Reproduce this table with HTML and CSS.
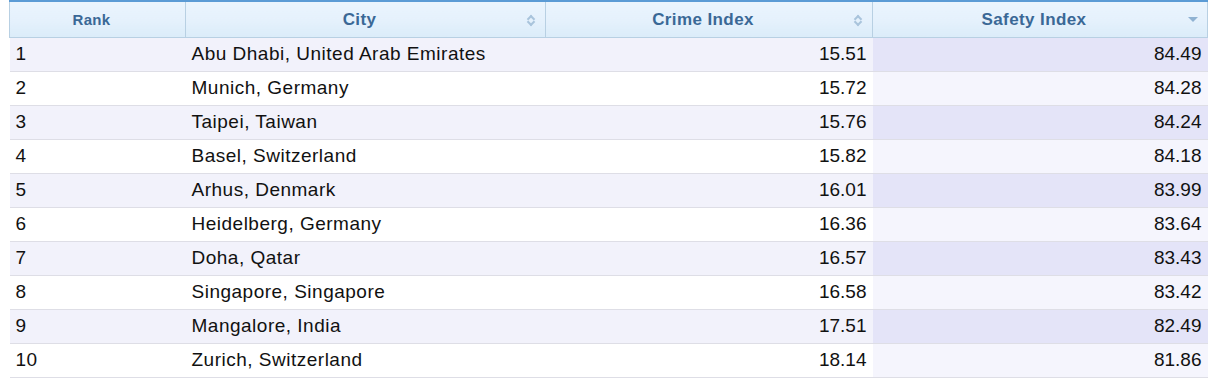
FILE: index.html
```html
<!DOCTYPE html>
<html lang="en">
  <head>
    <meta charset="UTF-8" />
    <title>Safety Index by City</title>
    <link rel="stylesheet" href="styles.css">
  </head>
  <body>
    <table class="rank-table">
      <thead>
        <tr>
          <th class="col-rank">Rank</th>
          <th class="col-city sortable">City<span class="sort both"></span></th>
          <th class="col-crime sortable">Crime Index<span class="sort both"></span></th>
          <th class="col-safety sortable">Safety Index<span class="sort desc"></span></th>
        </tr>
      </thead>
      <tbody>
        <tr><td>1</td><td>Abu Dhabi, United Arab Emirates</td><td class="num">15.51</td><td class="num sorted">84.49</td></tr>
        <tr><td>2</td><td>Munich, Germany</td><td class="num">15.72</td><td class="num sorted">84.28</td></tr>
        <tr><td>3</td><td>Taipei, Taiwan</td><td class="num">15.76</td><td class="num sorted">84.24</td></tr>
        <tr><td>4</td><td>Basel, Switzerland</td><td class="num">15.82</td><td class="num sorted">84.18</td></tr>
        <tr><td>5</td><td>Arhus, Denmark</td><td class="num">16.01</td><td class="num sorted">83.99</td></tr>
        <tr><td>6</td><td>Heidelberg, Germany</td><td class="num">16.36</td><td class="num sorted">83.64</td></tr>
        <tr><td>7</td><td>Doha, Qatar</td><td class="num">16.57</td><td class="num sorted">83.43</td></tr>
        <tr><td>8</td><td>Singapore, Singapore</td><td class="num">16.58</td><td class="num sorted">83.42</td></tr>
        <tr><td>9</td><td>Mangalore, India</td><td class="num">17.51</td><td class="num sorted">82.49</td></tr>
        <tr><td>10</td><td>Zurich, Switzerland</td><td class="num">18.14</td><td class="num sorted">81.86</td></tr>
      </tbody>
    </table>
  </body>
</html>
```

FILE: styles.css
```css
body {
  margin: 0;
  padding: 0 5px 0 9px;
  background: #fff;
  font-family: "Liberation Sans", Arial, sans-serif;
}

.rank-table {
  width: 1199px;
  border-collapse: collapse;
  table-layout: fixed;
}

.rank-table thead tr {
  border-top: 2px solid #5b9bd5;
}

.rank-table th {
  position: relative;
  height: 35px;
  padding: 0 12px 0 0;
  background: linear-gradient(to bottom, #eaf4fd 0%, #e5f1fc 50%, #dbecf9 100%);
  color: #3a6896;
  font-size: 17px;
  letter-spacing: 0.4px;
  font-weight: bold;
  text-align: center;
  border-left: 1px solid #b8d0e3;
  border-right: 1px solid #b8d0e3;
  border-bottom: 1px solid #b8d0e3;
}

th.col-rank {
  width: 163px;
  font-size: 15px;
  letter-spacing: 0.3px;
}

.col-city {
  width: 347px;
}

.col-crime {
  width: 314px;
}

.sort {
  position: absolute;
  right: 10px;
  top: 50%;
  width: 8px;
  height: 12px;
  margin-top: -6px;
}

.sort.both::before,
.sort.both::after {
  content: "";
  position: absolute;
  left: 1px;
  width: 4px;
  height: 4px;
  border-left: 2px solid #a9c4dc;
  border-top: 2px solid #a9c4dc;
}

.sort.both::before {
  top: 2px;
  transform: rotate(45deg);
}

.sort.both::after {
  top: 5px;
  transform: rotate(225deg);
}

.sort.desc::before {
  content: "";
  position: absolute;
  left: -1px;
  top: 3px;
  border-left: 5px solid transparent;
  border-right: 5px solid transparent;
  border-top: 5px solid #8fb2d2;
}

.rank-table td {
  height: 32px;
  padding: 0 6px 1px;
  font-size: 19px;
  letter-spacing: 0.5px;
  color: #111;
  border-bottom: 1px solid #dedee6;
  white-space: nowrap;
}

.rank-table td.num {
  text-align: right;
  letter-spacing: 0;
}

.rank-table tbody tr:nth-child(odd) td {
  background: #f2f2fb;
}

.rank-table tbody tr:nth-child(even) td {
  background: #fff;
}

.rank-table tbody tr:nth-child(odd) td.sorted {
  background: #e4e4f8;
}

.rank-table tbody tr:nth-child(even) td.sorted {
  background: #f5f5fd;
}
```
